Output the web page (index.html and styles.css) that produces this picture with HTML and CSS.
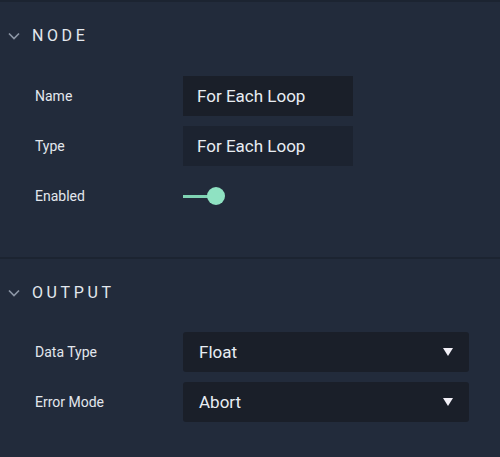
FILE: index.html
```html
<!DOCTYPE html>
<html>
<head>
<meta charset="utf-8">
<link rel="stylesheet" href="styles.css">
</head>
<body>
<section class="section section-first">
  <div class="section-header">
    <svg class="chevron" width="12" height="8" viewBox="0 0 12 8"><path d="M1 1.5 L6 6.5 L11 1.5" fill="none" stroke="#8b95a4" stroke-width="1.7"/></svg>
    <span class="section-title">NODE</span>
  </div>
  <div class="rows">
    <div class="row">
      <span class="label">Name</span>
      <div class="field field-text">For Each Loop</div>
    </div>
    <div class="row">
      <span class="label">Type</span>
      <div class="field field-text field-readonly">For Each Loop</div>
    </div>
    <div class="row">
      <span class="label">Enabled</span>
      <div class="toggle"><span class="toggle-track"></span><span class="toggle-knob"></span></div>
    </div>
  </div>
</section>
<section class="section">
  <div class="section-header">
    <svg class="chevron" width="12" height="8" viewBox="0 0 12 8"><path d="M1 1.5 L6 6.5 L11 1.5" fill="none" stroke="#8b95a4" stroke-width="1.7"/></svg>
    <span class="section-title">OUTPUT</span>
  </div>
  <div class="rows">
    <div class="row">
      <span class="label">Data Type</span>
      <div class="field field-select"><span>Float</span><span class="caret"></span></div>
    </div>
    <div class="row">
      <span class="label">Error Mode</span>
      <div class="field field-select"><span>Abort</span><span class="caret"></span></div>
    </div>
  </div>
</section>
</body>
</html>
```
FILE: styles.css
```css
* { box-sizing: border-box; }
html, body {
  margin: 0;
  padding: 0;
  background: #222b3b;
  width: 500px;
  height: 457px;
  overflow: hidden;
  font-family: Roboto, "Liberation Sans", sans-serif;
}
.section {
  border-top: 2px solid #1c2431;
}
.section-first {
  padding-bottom: 41px;
}
.section-header {
  display: flex;
  align-items: center;
  height: 40px;
  margin-top: 13px;
  margin-bottom: 20px;
  padding-left: 8px;
}
.section-first .section-header {
  margin-bottom: 21px;
}
.chevron {
  margin-right: 12px;
  margin-top: 1px;
}
.section-title {
  color: #e3e8ee;
  font-size: 16px;
  letter-spacing: 3.6px;
  font-weight: 400;
}
.rows {
  display: flex;
  flex-direction: column;
  gap: 10px;
}
.row {
  display: flex;
  align-items: center;
  height: 40px;
  padding-left: 35px;
}
.label {
  width: 148px;
  color: #e2e7ed;
  font-size: 14px;
}
.field {
  height: 40px;
  background: #1a1f29;
  display: flex;
  align-items: center;
  color: #e8edf3;
  font-size: 17px;
  padding-left: 14px;
}
.field-text {
  width: 170px;
}
.field-readonly {
  background: #1c2330;
}
.field-select {
  width: 286px;
  border-radius: 3px;
  justify-content: space-between;
  padding-right: 16px;
  padding-left: 16px;
}
.caret {
  width: 0;
  height: 0;
  border-left: 5.5px solid transparent;
  border-right: 5.5px solid transparent;
  border-top: 8px solid #f2f0f7;
}
.toggle {
  position: relative;
  width: 44px;
  height: 20px;
  display: flex;
  align-items: center;
}
.toggle-track {
  width: 26px;
  height: 3px;
  background: #7fd3b3;
}
.toggle-knob {
  position: absolute;
  left: 24px;
  top: 1px;
  width: 18px;
  height: 18px;
  border-radius: 50%;
  background: #8fe2c2;
}
```
